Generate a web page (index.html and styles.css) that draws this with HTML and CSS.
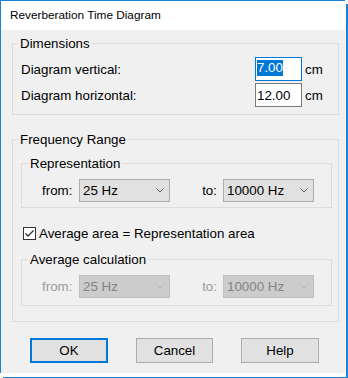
FILE: index.html
```html
<!DOCTYPE html>
<html>
<head>
<meta charset="utf-8">
<link rel="stylesheet" href="styles.css">
</head>
<body>
<div class="frame">
  <div class="window">
    <div class="titlebar">Reverberation Time Diagram</div>
    <div class="client">
      <fieldset class="group dims">
        <legend>Dimensions</legend>
        <div class="dim-grid">
          <span>Diagram vertical:</span>
          <span class="edit focus"><span class="sel">7.00</span></span>
          <span class="unit">cm</span>
          <span>Diagram horizontal:</span>
          <span class="edit">12.00</span>
          <span class="unit">cm</span>
        </div>
      </fieldset>

      <fieldset class="group freq">
        <legend>Frequency Range</legend>
        <div class="freq-body">
          <fieldset class="group sub">
            <legend>Representation</legend>
            <div class="range">
              <span class="lbl">from:</span>
              <span class="combo"><span>25 Hz</span><svg class="chev" width="8" height="5" viewBox="0 0 8 5"><polyline points="0.5,0.5 4,4 7.5,0.5" fill="none" stroke="#606060" stroke-width="1"/></svg></span>
              <span class="lbl to">to:</span>
              <span class="combo"><span>10000 Hz</span><svg class="chev" width="8" height="5" viewBox="0 0 8 5"><polyline points="0.5,0.5 4,4 7.5,0.5" fill="none" stroke="#606060" stroke-width="1"/></svg></span>
            </div>
          </fieldset>

          <label class="check">
            <svg class="box" width="13" height="13" viewBox="0 0 13 13"><rect x="0.5" y="0.5" width="12" height="12" fill="#fff" stroke="#333" stroke-width="1"/><polyline points="2.5,6.5 5,9 10.5,3.5" fill="none" stroke="#333" stroke-width="1.3"/></svg>
            <span>Average area = Representation area</span>
          </label>

          <fieldset class="group sub avg disabled">
            <legend>Average calculation</legend>
            <div class="range">
              <span class="lbl">from:</span>
              <span class="combo"><span>25 Hz</span><svg class="chev" width="8" height="5" viewBox="0 0 8 5"><polyline points="0.5,0.5 4,4 7.5,0.5" fill="none" stroke="#b4b4b4" stroke-width="1"/></svg></span>
              <span class="lbl to">to:</span>
              <span class="combo"><span>10000 Hz</span><svg class="chev" width="8" height="5" viewBox="0 0 8 5"><polyline points="0.5,0.5 4,4 7.5,0.5" fill="none" stroke="#b4b4b4" stroke-width="1"/></svg></span>
            </div>
          </fieldset>
        </div>
      </fieldset>

      <div class="buttons">
        <button class="btn default">OK</button>
        <button class="btn">Cancel</button>
        <button class="btn">Help</button>
      </div>
    </div>
  </div>
</div>
</body>
</html>
```

FILE: styles.css
```css
html, body {
  margin: 0;
  padding: 0;
  background: #ffffff;
}
body {
  font-family: "Liberation Sans", Arial, sans-serif;
  font-size: 13.33px;
  color: #000;
}
.frame {
  position: relative;
  width: 348px;
  height: 378px;
  overflow: hidden;
}
.frame::before {
  content: "";
  position: absolute;
  left: 346px;
  top: 4px;
  width: 2px;
  height: 374px;
  background: #1883d7;
}
.frame::after {
  content: "";
  position: absolute;
  left: 3px;
  top: 377px;
  width: 345px;
  height: 1px;
  background: #1883d7;
}
.window {
  width: 344px;
  border-left: 1px solid #1883d7;
  border-top: 1px solid #1883d7;
}
.titlebar {
  height: 29px;
  line-height: 29px;
  background: #fff;
  padding-left: 9px;
  font-size: 11.8px;
  white-space: nowrap;
}
.client {
  background: #f0f0f0;
  height: 343px;
  box-sizing: border-box;
  padding: 5px 6px 0 11px;
}
.group {
  margin: 0;
  padding: 0;
  border: 1px solid #dcdcdc;
  min-width: 0;
}
.group legend {
  padding: 0 2px;
  margin-left: 5px;
  height: 17px;
  line-height: 17px;
}
.group.sub legend {
  margin-left: 6px;
}
.dim-grid {
  display: grid;
  grid-template-columns: 1fr 47px 22px;
  row-gap: 2px;
  align-items: center;
  padding: 5px 14px 7px 8px;
}
.edit {
  height: 24px;
  box-sizing: border-box;
  border: 1px solid #7a7a7a;
  background: #fff;
  padding-left: 1px;
  display: flex;
  align-items: center;
}
.edit.focus {
  border-color: #0078d7;
}
.sel {
  background: #0078d7;
  color: #fff;
  line-height: 16px;
  margin-top: -2px;
}
.unit {
  padding-left: 3px;
}
.freq {
  margin-top: 16px;
}
.freq-body {
  padding: 7px 6px 15px 8px;
}
.range {
  display: grid;
  grid-template-columns: 37px 91px 53px 91px;
  align-items: center;
  padding: 7px 0 5px 20px;
}
.avg .range {
  padding-bottom: 7px;
}
.lbl.to {
  text-align: right;
  padding-right: 6px;
}
.combo {
  height: 23px;
  box-sizing: border-box;
  border: 1px solid #adadad;
  background: #e1e1e1;
  display: flex;
  align-items: center;
  justify-content: space-between;
  padding: 0 5px 0 3px;
}
.disabled .lbl {
  color: #9a9a9a;
}
.disabled .combo {
  background: #cccccc;
  border-color: #bfbfbf;
  color: #838383;
}
.check {
  display: flex;
  align-items: center;
  gap: 3px;
  height: 17px;
  margin: 17px 0 9px 2px;
}
.box {
  display: block;
  flex: none;
}
.buttons {
  display: grid;
  grid-template-columns: 78px 77px 78px;
  column-gap: 28px;
  margin-top: 16px;
  padding-left: 18px;
}
.btn {
  height: 25px;
  box-sizing: border-box;
  border: 1px solid #adadad;
  background: #e1e1e1;
  font-family: "Liberation Sans", Arial, sans-serif;
  font-size: 13.33px;
  color: #000;
  padding: 0;
  margin: 0;
}
.btn.default {
  border: 2px solid #0078d7;
}
```
